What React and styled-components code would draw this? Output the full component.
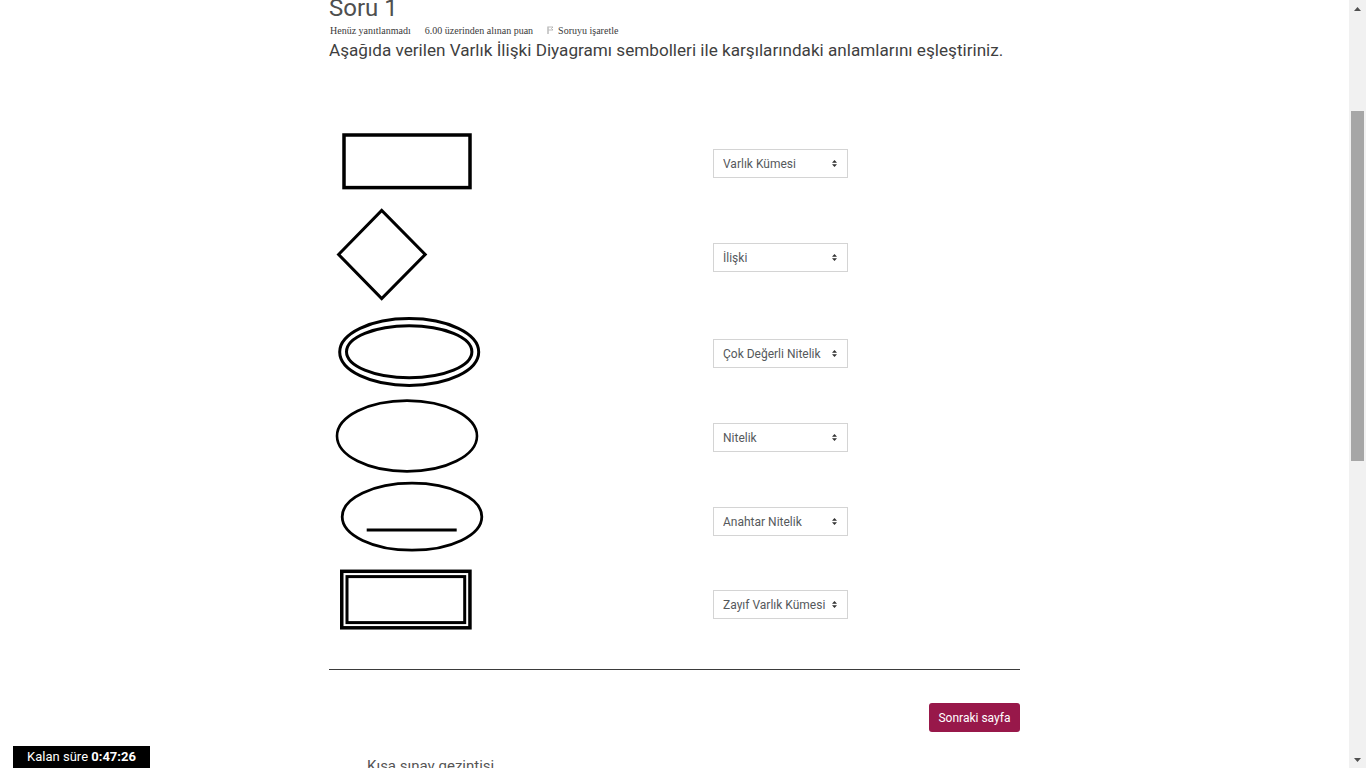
import React, { useLayoutEffect, useRef } from 'react';
import styled, { createGlobalStyle } from 'styled-components';

const GlobalStyle = createGlobalStyle`
  html, body {
    margin: 0;
    padding: 0;
    overflow: hidden;
    background: #ffffff;
    font-family: Roboto, "Liberation Sans", sans-serif;
  }
  * { box-sizing: border-box; }
`;

const SCROLL_TOP = 206;
const DOC_HEIGHT = 1610;
const VIEW_HEIGHT = 768;
const TRACK = VIEW_HEIGHT - 34;

const Page = styled.div`
  display: flex;
  width: 100vw;
  height: 100vh;
`;

const Viewport = styled.div`
  flex: 1;
  overflow: hidden;
`;

const Document = styled.div`
  min-height: ${DOC_HEIGHT}px;
`;

const SiteHeader = styled.header`
  height: 200px;
  display: flex;
  flex-direction: column;
`;

const NavBar = styled.div`
  height: 50px;
  background: #f7f7f7;
  border-bottom: 1px solid #e5e5e5;
`;

const Column = styled.main`
  width: 691px;
  margin: 0 auto;
`;

const QuestionTitle = styled.h3`
  margin: 0;
  font-size: 24px;
  line-height: 29px;
  font-weight: 400;
  color: #4f4f4f;
`;

const Meta = styled.div`
  display: flex;
  align-items: center;
  height: 14px;
  font-family: "Liberation Serif", "DejaVu Serif", serif;
  font-size: 10px;
  color: #3a3a3a;
  padding-left: 1px;
`;

const MetaItem = styled.span`
  margin-right: ${p => p.$gap || 14}px;
  display: inline-flex;
  align-items: center;
  gap: 4px;
`;

const QuestionText = styled.p`
  margin: 1px 0 0;
  font-size: 17.15px;
  line-height: 24px;
  color: #3f3f3f;
`;

const MatchTable = styled.div`
  margin-top: 54px;
  display: flex;
  flex-direction: column;
`;

const MatchRow = styled.div`
  display: grid;
  grid-template-columns: 384px auto;
  align-items: center;
  height: ${p => p.$h}px;
  padding-top: ${p => p.$shift || 0}px;
`;

const ShapeSvg = styled.svg`
  display: block;
  width: 160px;
  height: 100px;
  margin: -20px 0;
  overflow: visible;
  fill: none;
  stroke: #000;
`;

const SelectWrap = styled.div`
  position: relative;
  width: 135px;
  height: 29px;
`;

const Select = styled.select`
  appearance: none;
  -webkit-appearance: none;
  width: 100%;
  height: 100%;
  border: 1px solid #d4d4d4;
  border-radius: 0;
  background: #fff;
  padding: 1px 18px 0 9px;
  font-family: Roboto, "Liberation Sans", sans-serif;
  font-size: 12px;
  color: #55595c;
  outline: none;
`;

const Caret = styled.svg`
  position: absolute;
  right: 11px;
  top: 10px;
  width: 5px;
  height: 9px;
  pointer-events: none;
`;

const Divider = styled.hr`
  margin: 23px 0 0;
  border: 0;
  border-top: 1px solid #3b3b3b;
`;

const Actions = styled.div`
  display: flex;
  justify-content: flex-end;
  margin-top: 33px;
`;

const NextButton = styled.button`
  height: 29px;
  padding: 0 9.5px;
  border: 0;
  border-radius: 3px;
  background: #98184a;
  color: #fff;
  font-family: Roboto, "Liberation Sans", sans-serif;
  font-size: 12px;
  cursor: pointer;
`;

const NavBlock = styled.section`
  margin-top: 23px;
  padding: 0 38px;
`;

const NavTitle = styled.h5`
  margin: 0;
  font-size: 15px;
  line-height: 22px;
  font-weight: 400;
  color: #555;
`;

const NavButtons = styled.div`
  display: flex;
  gap: 6px;
  margin-top: 14px;
`;

const NavCell = styled.span`
  width: 28px;
  height: 36px;
  border: 1px solid #bbb;
  border-radius: 3px;
  font-size: 13px;
  display: flex;
  align-items: center;
  justify-content: center;
  color: #333;
`;

const Timer = styled.div`
  position: fixed;
  left: 13px;
  top: 746px;
  width: 137px;
  height: 30px;
  background: #000;
  color: #fff;
  font-family: Roboto, "Liberation Sans", sans-serif;
  font-size: 13px;
  line-height: 18px;
  padding-top: 2px;
  text-align: center;
  b { font-weight: 700; }
`;

const Scrollbar = styled.div`
  width: 17px;
  background: #f1f1f1;
  display: flex;
  flex-direction: column;
`;

const ScrollArrow = styled.div`
  height: 17px;
  display: flex;
  align-items: center;
  justify-content: center;
`;

const ScrollTrack = styled.div`
  flex: 1;
  padding-top: ${p => p.$top}px;
`;

const ScrollThumb = styled.div`
  height: ${p => p.$size}px;
  margin: 0 2px;
  background: #a6a6a6;
`;

const FlagIcon = () => (
  <svg width="7" height="8" viewBox="0 0 7 8">
    <path d="M1 0.5 V8" stroke="#999" strokeWidth="1" />
    <path d="M1.5 1 H6 L4.5 2.5 L6 4 H1.5" fill="none" stroke="#aaa" strokeWidth="0.8" />
  </svg>
);

const rows = [
  {
    h: 94,
    label: 'Varlık Kümesi',
    shape: <rect x="15" y="22" width="126" height="52.6" strokeWidth="3.5" />
  },
  {
    h: 95,
    label: 'İlişki',
    shape: <polygon points="9.6,46.5 52.7,2.4 96.2,46.5 52.7,90.6" strokeWidth="3" />
  },
  {
    h: 90,
    shift: 7,
    label: 'Çok Değerli Nitelik',
    shape: (
      <>
        <ellipse cx="80.2" cy="48" rx="69.5" ry="33.5" strokeWidth="3" />
        <ellipse cx="80.2" cy="47.8" rx="62.7" ry="26" strokeWidth="3" />
      </>
    )
  },
  {
    h: 84,
    label: 'Nitelik',
    shape: <ellipse cx="78" cy="49" rx="70" ry="35.4" strokeWidth="2.6" />
  },
  {
    h: 84,
    label: 'Anahtar Nitelik',
    shape: (
      <>
        <ellipse cx="83" cy="45.7" rx="69.8" ry="33.5" strokeWidth="2.8" />
        <line x1="37.7" y1="59" x2="127.7" y2="59" strokeWidth="3" />
      </>
    )
  },
  {
    h: 83,
    label: 'Zayıf Varlık Kümesi',
    shape: (
      <>
        <rect x="12.75" y="16.3" width="128.2" height="56.5" strokeWidth="3.5" />
        <rect x="18" y="21.6" width="117.7" height="46" strokeWidth="3" />
      </>
    )
  }
];

const options = ['Varlık Kümesi', 'İlişki', 'Çok Değerli Nitelik', 'Nitelik', 'Anahtar Nitelik', 'Zayıf Varlık Kümesi'];

const App = () => {
  const viewRef = useRef(null);

  useLayoutEffect(() => {
    if (viewRef.current) viewRef.current.scrollTop = SCROLL_TOP;
  }, []);

  const thumbSize = Math.round((VIEW_HEIGHT / DOC_HEIGHT) * TRACK);
  const thumbTop = Math.round((SCROLL_TOP / DOC_HEIGHT) * TRACK);

  return (
    <>
      <GlobalStyle />
      <Page>
        <Viewport ref={viewRef}>
          <Document>
            <SiteHeader>
              <NavBar />
            </SiteHeader>
            <Column>
              <QuestionTitle>Soru 1</QuestionTitle>
              <Meta>
                <MetaItem>Henüz yanıtlanmadı</MetaItem>
                <MetaItem>6.00 üzerinden alınan puan</MetaItem>
                <MetaItem><FlagIcon />Soruyu işaretle</MetaItem>
              </Meta>
              <QuestionText>
                Aşağıda verilen Varlık İlişki Diyagramı sembolleri ile karşılarındaki anlamlarını eşleştiriniz.
              </QuestionText>

              <MatchTable>
                {rows.map((row, i) => (
                  <MatchRow key={i} $h={row.h} $shift={row.shift}>
                    <ShapeSvg viewBox="0 0 160 100">{row.shape}</ShapeSvg>
                    <SelectWrap>
                      <Select defaultValue={row.label}>
                        {options.map(o => (
                          <option key={o} value={o}>{o}</option>
                        ))}
                      </Select>
                      <Caret viewBox="0 0 5 9">
                        <path d="M2.5 1 L5 3.8 H0 Z M2.5 8 L5 5.2 H0 Z" fill="#333" />
                      </Caret>
                    </SelectWrap>
                  </MatchRow>
                ))}
              </MatchTable>

              <Divider />
              <Actions>
                <NextButton>Sonraki sayfa</NextButton>
              </Actions>

              <NavBlock>
                <NavTitle>Kısa sınav gezintisi</NavTitle>
                <NavButtons>
                  {[1, 2, 3, 4, 5, 6, 7, 8, 9, 10].map(n => (
                    <NavCell key={n}>{n}</NavCell>
                  ))}
                </NavButtons>
              </NavBlock>
            </Column>
          </Document>
        </Viewport>

        <Scrollbar>
          <ScrollArrow>
            <svg width="7" height="4" viewBox="0 0 7 4"><path d="M0 4 L3.5 0 L7 4 Z" fill="#505050" /></svg>
          </ScrollArrow>
          <ScrollTrack $top={thumbTop}>
            <ScrollThumb $size={thumbSize} />
          </ScrollTrack>
          <ScrollArrow>
            <svg width="7" height="4" viewBox="0 0 7 4"><path d="M0 0 L3.5 4 L7 0 Z" fill="#505050" /></svg>
          </ScrollArrow>
        </Scrollbar>
      </Page>

      <Timer>
        Kalan süre <b>0:47:26</b>
      </Timer>
    </>
  );
};

export default App;
